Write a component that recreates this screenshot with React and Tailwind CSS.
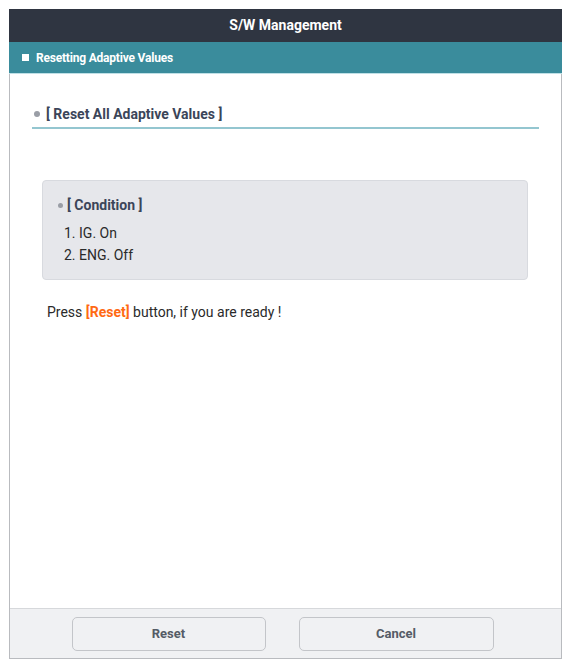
import React from "react";

export default function App() {
  const conditions = ["1. IG. On", "2. ENG. Off"];

  return (
    <div className="w-[571px] h-[668px] bg-white pt-[9px] pl-[9px] font-['Roboto','Liberation_Sans',sans-serif]">
      <div className="w-[553px] h-[650px] flex flex-col border-x border-b border-[#b9bbbf]">
        {/* Title bar */}
        <div className="h-[33px] -mx-px bg-[#2f3541] flex items-center justify-center">
          <span className="text-white text-[14px] font-bold">S/W Management</span>
        </div>

        {/* Section bar */}
        <div className="h-[32px] -mx-px bg-[#3a8c9c] border-b border-[#bfe0e6] flex items-center pl-[13px] gap-[7px]">
          <div className="w-[7px] h-[7px] bg-white" />
          <span className="text-white text-[12px] font-bold tracking-[-0.2px]">Resetting Adaptive Values</span>
        </div>

        {/* Content */}
        <div className="flex-1 px-[22px]">
          <div className="mt-[30px] pb-[3px] border-b-2 border-[#94c6d0] flex items-center gap-[6px] pl-[2px]">
            <div className="w-[6px] h-[6px] rounded-full bg-[#9a9ea6]" />
            <span className="text-[14px] leading-[20px] font-bold text-[#3b4559]">[ Reset All Adaptive Values ]</span>
          </div>

          <div className="mt-[51px] ml-[10px] mr-[11px] bg-[#e6e7eb] border border-[#d8dadf] rounded-[4px] pt-[14px] pb-[13px] pl-[15px]">
            <div className="flex items-center gap-[4px]">
              <div className="w-[5px] h-[5px] rounded-full bg-[#9a9ea6]" />
              <span className="text-[14px] leading-[20px] font-bold text-[#3b4559]">[ Condition ]</span>
            </div>
            <div className="mt-[7px] pl-[6px]">
              {conditions.map((c) => (
                <div key={c} className="text-[14px] leading-[22px] text-[#2a2a2a]">
                  {c}
                </div>
              ))}
            </div>
          </div>

          <p className="mt-[22px] ml-[15px] text-[14px] leading-[20px] text-[#2a2a2a]">
            Press <span className="font-bold text-[#ff6a13]">[Reset]</span> button, if you are ready !
          </p>
        </div>

        {/* Footer */}
        <div className="h-[50px] bg-[#f0f1f3] border-t border-[#d6d8db] flex justify-center items-start pt-[8px] gap-[33px] pr-[6px]">
          <button className="w-[194px] h-[34px] rounded-[5px] border border-[#c3c5c9] bg-[#f0f1f3] text-[13px] font-bold text-[#555c66]">
            Reset
          </button>
          <button className="w-[195px] h-[34px] rounded-[5px] border border-[#c3c5c9] bg-[#f0f1f3] text-[13px] font-bold text-[#555c66]">
            Cancel
          </button>
        </div>
      </div>
    </div>
  );
}
